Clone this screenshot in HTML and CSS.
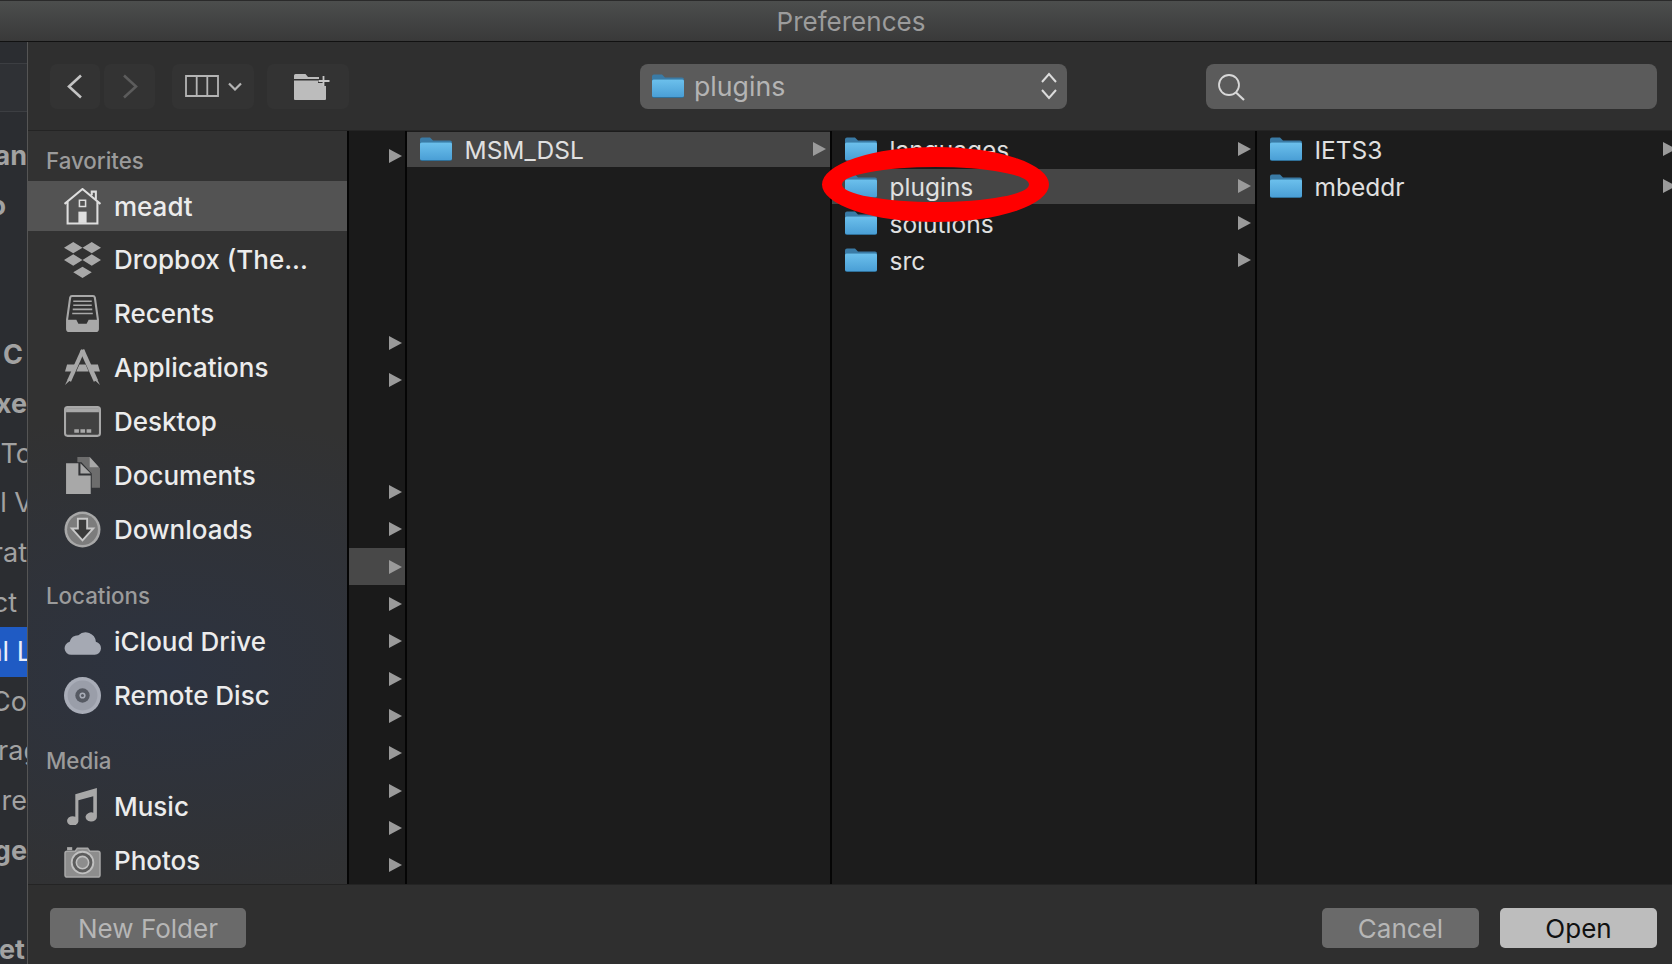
FILE: index.html
```html
<!DOCTYPE html>
<html lang="en">
<head>
  <meta charset="UTF-8">
  <meta name="viewport" content="width=device-width, initial-scale=1.0">
  <title>Preferences</title>
  <link rel="stylesheet" href="styles.css">
</head>
<body>
  <svg class="defs" width="0" height="0" aria-hidden="true">
    <defs>
      <linearGradient id="folder-blue" x1="0" y1="0" x2="0" y2="1">
        <stop offset="0" stop-color="#6cc0ec"/>
        <stop offset="1" stop-color="#4a9fd6"/>
      </linearGradient>
      <symbol id="folder" viewBox="0 0 32 24">
        <path d="M0 8V2.5A2 2 0 0 1 2 .5h8l3 3h17a2 2 0 0 1 2 2V8z" fill="#3a7ba6"/>
        <rect y="5" width="32" height="19" rx="2" fill="#2f7099"/>
        <rect y="5.5" width="32" height="17.5" rx="1.5" fill="url(#folder-blue)"/>
      </symbol>
      <symbol id="arrow" viewBox="0 0 13 14">
        <path d="M0 0L13 7L0 14z" fill="#9a9a9a"/>
      </symbol>
    </defs>
  </svg>

  <div class="titlebar">Preferences</div>

  <div class="app">
    <!-- window behind the dialog, only its right edge shows -->
    <div class="behind">
      <div class="behind-field"></div>
      <div class="behind-row bold">an</div>
      <div class="behind-row bold edge-21">o</div>
      <div class="behind-row"></div>
      <div class="behind-row"></div>
      <div class="behind-row bold edge-4">C</div>
      <div class="behind-row bold">xe</div>
      <div class="behind-row cut-5">To</div>
      <div class="behind-row cut-6">l V</div>
      <div class="behind-row">rat</div>
      <div class="behind-row edge-10">ct</div>
      <div class="behind-row active cut-5">al L</div>
      <div class="behind-row">Co</div>
      <div class="behind-row cut-13">rag</div>
      <div class="behind-row">re</div>
      <div class="behind-row bold">ge</div>
      <div class="behind-row"></div>
      <div class="behind-row bold edge-2">et</div>
    </div>

    <div class="dialog">
      <div class="toolbar">
        <div class="tool-btn nav-btn">
          <svg width="16" height="25" viewBox="0 0 16 25"><path d="M14 1.5L2 12.5L14 23.5" fill="none" stroke="#c4c4c4" stroke-width="2.6"/></svg>
        </div>
        <div class="tool-btn nav-btn next-btn">
          <svg width="16" height="25" viewBox="0 0 16 25"><path d="M2 1.5L14 12.5L2 23.5" fill="none" stroke="#5c5c5c" stroke-width="2.6"/></svg>
        </div>
        <div class="tool-btn view-btn">
          <svg width="34" height="22" viewBox="0 0 34 22"><path d="M1 1h32v20H1zM11.7 1v20M22.3 1v20" fill="none" stroke="#b4b4b4" stroke-width="1.8"/></svg>
          <svg width="14" height="9" viewBox="0 0 14 9"><path d="M1 1.5L7 7.5L13 1.5" fill="none" stroke="#b4b4b4" stroke-width="2.2"/></svg>
        </div>
        <div class="tool-btn newdir-btn">
          <svg width="37" height="27" viewBox="0 0 37 27">
            <path d="M1 5V2.5A1.500 1.500 0 0 1 2.500 1h10l2.500 3h11v2H1z" fill="#bcbcbc"/>
            <path d="M1 7.500h24v2.500h5v3h3V26a1 1 0 0 1-1 1H2a1 1 0 0 1-1-1z" fill="#bcbcbc"/>
            <path d="M30.500 3v10M25.500 8h11" stroke="#c8c8c8" stroke-width="1.800" fill="none"/>
          </svg>
        </div>
        <div class="path-select">
          <svg class="folder-big" width="32" height="26"><use href="#folder"/></svg>
          <span class="path-name">plugins</span>
          <svg class="updown" width="18" height="28" viewBox="0 0 18 28"><path d="M2 10L9 2L16 10M2 18L9 26L16 18" fill="none" stroke="#dcdcdc" stroke-width="2"/></svg>
        </div>
        <div class="search">
          <svg width="30" height="30" viewBox="0 0 30 30"><circle cx="12" cy="12" r="10" fill="none" stroke="#d8d8d8" stroke-width="1.800"/><path d="M19 19.500L27 27" stroke="#d8d8d8" stroke-width="2.200"/></svg>
        </div>
      </div>

      <div class="main">
        <div class="sidebar">
          <div class="side-title">Favorites</div>
          <div class="side-item selected">
            <svg class="side-icon" viewBox="0 0 36 36">
              <path d="M.5 15.500L18 1L35.500 15.500M27 7V3.500h4v7.500M3.500 13V34.500h29V13" fill="none" stroke="currentColor" stroke-width="2"/>
              <path d="M15 12h6v6h-6z" fill="none" stroke="currentColor" stroke-width="1.500"/>
              <path d="M14 23h8v11h-8z" fill="currentColor"/>
            </svg>
            <span>meadt</span>
          </div>
          <div class="side-item">
            <svg class="side-icon" viewBox="0 0 36 36">
              <path d="M9 1l9 5.500-9 5.500-9-5.500zM27 1l9 5.500-9 5.500-9-5.500zM9 13l9 5.500-9 5.500-9-5.500zM27 13l9 5.500-9 5.500-9-5.500zM18 25l9 5.500-9 5.500-9-5.500z" fill="currentColor"/>
            </svg>
            <span>Dropbox (The...</span>
          </div>
          <div class="side-item">
            <svg class="side-icon" viewBox="0 0 36 36">
              <path d="M6 2.500A2 2 0 0 1 8 1h20a2 2 0 0 1 2 1.500L33 24v9a2 2 0 0 1-2 2H5a2 2 0 0 1-2-2v-9z" fill="none" stroke="currentColor" stroke-width="2"/>
              <path d="M9 6h18M9 10h18M8.500 14h19M8 18h20" stroke="currentColor" stroke-width="1.500"/>
              <path d="M3 24h9l2 4h8l2-4h9v9a2 2 0 0 1-2 2H5a2 2 0 0 1-2-2z" fill="currentColor"/>
            </svg>
            <span>Recents</span>
          </div>
          <div class="side-item">
            <svg class="side-icon" viewBox="0 0 36 36">
              <path d="M18.500 1L5 31" stroke="currentColor" stroke-width="4" fill="none"/>
              <path d="M17.500 1L31 31" stroke="currentColor" stroke-width="4.500" fill="none"/>
              <path d="M3 15h10l-3 7H1zM15 15h6l3 7H12zM23 15h10l2 7H26z" fill="currentColor"/>
              <path d="M1 35l2.500-5h3zM35 35l-2.500-5h-3z" fill="currentColor"/>
            </svg>
            <span>Applications</span>
          </div>
          <div class="side-item">
            <svg class="side-icon" viewBox="0 0 36 36">
              <rect x="1" y="4" width="34" height="28" rx="2.500" fill="#414141" stroke="currentColor" stroke-width="2"/>
              <rect x="2" y="5" width="32" height="4" fill="currentColor"/>
              <path d="M10 25.500h4.500V29H10zM16 25.500h4.500V29H16zM22 25.500h4.500V29H22z" fill="currentColor"/>
            </svg>
            <span>Desktop</span>
          </div>
          <div class="side-item">
            <svg class="side-icon" viewBox="0 0 36 36">
              <path d="M13 0h12l10 11v19h-8V16L17 5h-4z" fill="#6d6d6d"/>
              <path d="M25 0v10h9z" fill="#a8a8a8"/>
              <path d="M2 6h12v12h12v18H2z" fill="currentColor"/>
              <path d="M16 6l10 10H16z" fill="currentColor"/>
            </svg>
            <span>Documents</span>
          </div>
          <div class="side-item">
            <svg class="side-icon" viewBox="0 0 36 36">
              <circle cx="18" cy="18" r="17.500" fill="#a8a8a8"/>
              <circle cx="18" cy="18" r="15" fill="#7c7c7c"/>
              <path d="M13.500 7.500h9V17h6L18 28.500 7.500 17h6z" fill="#3a3a3a" stroke="#c8c8c8" stroke-width="1.800"/>
            </svg>
            <span>Downloads</span>
          </div>

          <div class="side-title spaced">Locations</div>
          <div class="side-item">
            <svg class="side-icon" viewBox="0 0 36 36">
              <path d="M7 31a6.500 6.500 0 0 1-1.500-12.800A9 9 0 0 1 14 12a10 10 0 0 1 17 6.200A6.500 6.500 0 0 1 30 31z" fill="#a5a9b3"/>
            </svg>
            <span>iCloud Drive</span>
          </div>
          <div class="side-item">
            <svg class="side-icon" viewBox="0 0 36 36">
              <circle cx="18" cy="18" r="18" fill="#a9adb8"/>
              <circle cx="18" cy="18" r="14.500" fill="#9a9ea9"/>
              <circle cx="18" cy="18" r="7" fill="#565a63"/>
              <circle cx="18" cy="18" r="3" fill="#a9adb8"/>
              <circle cx="18" cy="18" r="1.500" fill="#565a63"/>
            </svg>
            <span>Remote Disc</span>
          </div>

          <div class="side-title spaced media">Media</div>
          <div class="side-item">
            <svg class="side-icon" viewBox="0 0 36 36">
              <path d="M11 6L32 0V28A5.500 4.500 0 1 1 28.500 24V8L14 12V32.500A5.500 4.500 0 1 1 11 28z" fill="currentColor"/>
            </svg>
            <span>Music</span>
          </div>
          <div class="side-item">
            <svg class="side-icon" viewBox="0 0 36 36">
              <path d="M3 9h8l2-3h10l2 3h8a2 2 0 0 1 2 2v21a2 2 0 0 1-2 2H3a2 2 0 0 1-2-2V11a2 2 0 0 1 2-2z" fill="#8d8d8d" stroke="#a8a8a8" stroke-width="1.500"/>
              <path d="M3 5h5v3H3z" fill="#a8a8a8"/>
              <circle cx="18" cy="20" r="10.500" fill="#5c5c5c" stroke="#c0c0c0" stroke-width="1.800"/>
              <circle cx="18" cy="20" r="6" fill="#8d8d8d" stroke="#c0c0c0" stroke-width="1.500"/>
            </svg>
            <span>Photos</span>
          </div>
        </div>

        <div class="col col-narrow">
          <div class="narrow-row"><svg class="arrow"><use href="#arrow"/></svg></div>
          <div class="narrow-row"></div>
          <div class="narrow-row"></div>
          <div class="narrow-row"></div>
          <div class="narrow-row"></div>
          <div class="narrow-row"><svg class="arrow"><use href="#arrow"/></svg></div>
          <div class="narrow-row"><svg class="arrow"><use href="#arrow"/></svg></div>
          <div class="narrow-row"></div>
          <div class="narrow-row"></div>
          <div class="narrow-row"><svg class="arrow"><use href="#arrow"/></svg></div>
          <div class="narrow-row"><svg class="arrow"><use href="#arrow"/></svg></div>
          <div class="narrow-row current"><svg class="arrow"><use href="#arrow"/></svg></div>
          <div class="narrow-row"><svg class="arrow"><use href="#arrow"/></svg></div>
          <div class="narrow-row"><svg class="arrow"><use href="#arrow"/></svg></div>
          <div class="narrow-row"><svg class="arrow"><use href="#arrow"/></svg></div>
          <div class="narrow-row"><svg class="arrow"><use href="#arrow"/></svg></div>
          <div class="narrow-row"><svg class="arrow"><use href="#arrow"/></svg></div>
          <div class="narrow-row"><svg class="arrow"><use href="#arrow"/></svg></div>
          <div class="narrow-row"><svg class="arrow"><use href="#arrow"/></svg></div>
          <div class="narrow-row"><svg class="arrow"><use href="#arrow"/></svg></div>
        </div>

        <div class="col">
          <div class="file-row current">
            <svg class="folder"><use href="#folder"/></svg>
            <span class="file-name">MSM_DSL</span>
            <svg class="arrow"><use href="#arrow"/></svg>
          </div>
        </div>

        <div class="col">
          <div class="file-row">
            <svg class="folder"><use href="#folder"/></svg>
            <span class="file-name">languages</span>
            <svg class="arrow"><use href="#arrow"/></svg>
          </div>
          <div class="file-row current">
            <svg class="folder"><use href="#folder"/></svg>
            <span class="file-name">plugins</span>
            <svg class="arrow"><use href="#arrow"/></svg>
          </div>
          <div class="file-row">
            <svg class="folder"><use href="#folder"/></svg>
            <span class="file-name">solutions</span>
            <svg class="arrow"><use href="#arrow"/></svg>
          </div>
          <div class="file-row">
            <svg class="folder"><use href="#folder"/></svg>
            <span class="file-name">src</span>
            <svg class="arrow"><use href="#arrow"/></svg>
          </div>
        </div>

        <div class="col">
          <div class="file-row">
            <svg class="folder"><use href="#folder"/></svg>
            <span class="file-name">IETS3</span>
            <svg class="arrow"><use href="#arrow"/></svg>
          </div>
          <div class="file-row">
            <svg class="folder"><use href="#folder"/></svg>
            <span class="file-name">mbeddr</span>
            <svg class="arrow"><use href="#arrow"/></svg>
          </div>
        </div>
      </div>

      <div class="footer">
        <button class="btn btn-new">New Folder</button>
        <button class="btn btn-cancel">Cancel</button>
        <button class="btn btn-open">Open</button>
      </div>
    </div>
  </div>

  <!-- red marker somebody drew on the screenshot -->
  <div class="marker"></div>
</body>
</html>
```

FILE: styles.css
```css
* {
  box-sizing: border-box;
}

html, body {
  margin: 0;
  height: 964px;
  overflow: hidden;
}

body {
  font-family: Inter, "Liberation Sans", sans-serif;
  background: #2f2f2f;
  color: #e4e4e4;
}

.defs {
  display: block;
}

.titlebar {
  height: 42px;
  display: flex;
  align-items: center;
  justify-content: center;
  padding-left: 30px;
  font-size: 26px;
  color: #9c9c9c;
  background: linear-gradient(#4c4e4d, #393939);
  border-top: 1px solid #2a2a2a;
  border-bottom: 1px solid #111;
}

.app {
  display: flex;
  height: 922px;
}

/* window behind */
.behind {
  width: 27px;
  flex-shrink: 0;
  overflow: hidden;
  background: #2b2d31;
  color: #a2a2a2;
  font-size: 27px;
}

.behind-field {
  height: 49px;
  margin: 21px 0 19px;
  background: #2f3135;
  border-top: 1px solid #3c3e42;
  border-bottom: 1px solid #3c3e42;
}

.behind-row {
  height: 49.6px;
  display: flex;
  align-items: center;
  justify-content: flex-end;
  white-space: nowrap;
}

.behind-row.bold {
  font-weight: 700;
}

.behind-row.active {
  background: #1f5bc4;
  color: #e8eefc;
}

.behind-row.edge-2 { padding-right: 2px; }
.behind-row.edge-4 { padding-right: 4px; }
.behind-row.edge-10 { padding-right: 10px; }
.behind-row.edge-21 { padding-right: 21px; }
.behind-row.cut-5 { margin-right: -5px; }
.behind-row.cut-6 { margin-right: -6px; }
.behind-row.cut-13 { margin-right: -13px; }

.dialog {
  flex: 1;
  min-width: 0;
  border-left: 1px solid #555;
  display: flex;
  flex-direction: column;
}

/* toolbar */
.toolbar {
  height: 89px;
  flex-shrink: 0;
  display: flex;
  align-items: center;
  padding-left: 22px;
  background: #2f2f2f;
  border-bottom: 1px solid #242424;
}

.tool-btn {
  height: 45px;
  display: flex;
  align-items: center;
  justify-content: center;
  background: #333;
  border-radius: 7px;
}

.nav-btn {
  width: 50px;
}

.next-btn {
  width: 51px;
  margin-left: 4px;
}

.view-btn {
  width: 82px;
  margin-left: 17px;
  gap: 9px;
}

.newdir-btn {
  width: 82px;
  margin-left: 13px;
  padding-left: 6px;
}

.path-select {
  width: 427px;
  height: 45px;
  margin-left: 291px;
  display: flex;
  align-items: center;
  padding: 0 9px 0 12px;
  background: #5b5b5b;
  border-radius: 8px;
}

.path-name {
  margin-left: 10px;
  flex: 1;
  font-size: 26.7px;
  color: #b4b4b4;
}

.search {
  width: 451px;
  height: 45px;
  margin-left: 139px;
  display: flex;
  align-items: center;
  padding: 4px 0 0 11px;
  background: #5b5b5b;
  border-radius: 8px;
}

/* browser area */
.main {
  height: 753px;
  flex-shrink: 0;
  display: flex;
  overflow: hidden;
  background: #1c1c1c;
}

.sidebar {
  width: 319px;
  flex-shrink: 0;
  padding-top: 11px;
  overflow: hidden;
  background:
    radial-gradient(ellipse 420px 260px at 140px 540px, #2d3340, transparent),
    #323232;
}

.side-title {
  height: 36px;
  margin-bottom: 3px;
  padding-left: 18px;
  display: flex;
  align-items: center;
  font-size: 22.3px;
  font-weight: 500;
  color: #9b9b9b;
}

.side-title.spaced {
  margin-top: 23.5px;
}

.side-title.media {
  margin-top: 22px;
}

.side-item {
  height: 50px;
  margin-bottom: 3.9px;
  padding-left: 36px;
  display: flex;
  align-items: center;
  gap: 13px;
  font-size: 26px;
  font-weight: 500;
  color: #ececec;
}

.side-item.selected {
  background: #535353;
}

.side-icon {
  width: 37px;
  height: 37px;
  flex-shrink: 0;
  color: #a8a8a8;
}

.side-item.selected .side-icon {
  color: #dedede;
}

.col {
  width: 423px;
  flex-shrink: 0;
  padding-top: 1px;
  border-left: 2px solid #050505;
  box-sizing: content-box;
  background: #1c1c1c;
}

.col-narrow {
  width: 56px;
  padding-top: 6.5px;
  background: #1a1a1a;
}

.narrow-row {
  height: 37.33px;
  display: flex;
  align-items: center;
  justify-content: flex-end;
  padding-right: 3px;
}

.narrow-row.current {
  background: #484848;
}

.arrow {
  width: 13px;
  height: 14px;
  flex-shrink: 0;
}

.file-row {
  height: 35px;
  margin-bottom: 2.33px;
  display: flex;
  align-items: center;
  padding: 0 4px 0 13px;
}

.file-row .arrow {
  margin-bottom: 2px;
}

.file-row.current {
  background: #464646;
}

.folder {
  width: 32px;
  height: 24px;
  margin-bottom: 2px;
  flex-shrink: 0;
}

.file-name {
  flex: 1;
  margin-left: 12.5px;
  font-size: 24.5px;
  color: #e0e0e0;
}

/* bottom bar */
.footer {
  height: 80px;
  flex-shrink: 0;
  display: flex;
  align-items: flex-start;
  padding: 23px 15px 0 22px;
  background: #2f2f2f;
  border-top: 1px solid #242424;
}

.btn {
  height: 40px;
  padding: 0;
  border: none;
  border-radius: 5px;
  font-family: inherit;
  font-size: 26px;
}

.btn-new {
  width: 196px;
  margin-right: auto;
  background: #6a6a6a;
  color: #b6b6b6;
}

.btn-cancel {
  width: 157px;
  background: #6a6a6a;
  color: #b6b6b6;
}

.btn-open {
  width: 157px;
  margin-left: 21px;
  background: #bdbdbd;
  color: #111;
}

.marker {
  position: absolute;
  left: 822px;
  top: 147px;
  width: 227px;
  height: 75px;
  border: 20px solid #f00;
  border-radius: 50%;
}
```
